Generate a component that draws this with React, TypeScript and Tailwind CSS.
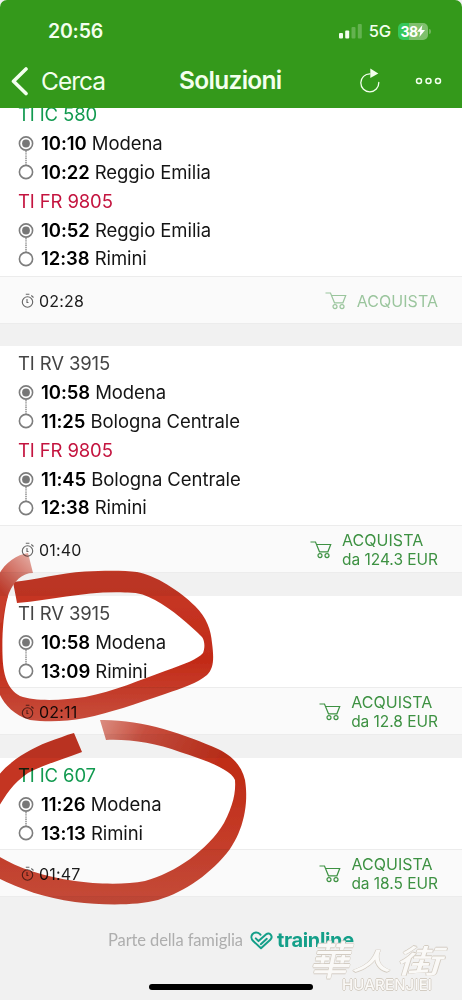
import { clsx } from 'clsx'

interface Stop {
  time: string
  station: string
}

interface Leg {
  train: string
  color: string
  from: Stop
  to: Stop
}

interface Solution {
  legs: Leg[]
  duration: string
  price?: string
}

const SOLUTIONS: Solution[] = [
  {
    legs: [
      {
        train: 'TI IC 580',
        color: 'text-[#129a50]',
        from: { time: '10:10', station: 'Modena' },
        to: { time: '10:22', station: 'Reggio Emilia' },
      },
      {
        train: 'TI FR 9805',
        color: 'text-[#c4143f]',
        from: { time: '10:52', station: 'Reggio Emilia' },
        to: { time: '12:38', station: 'Rimini' },
      },
    ],
    duration: '02:28',
  },
  {
    legs: [
      {
        train: 'TI RV 3915',
        color: 'text-[#444444]',
        from: { time: '10:58', station: 'Modena' },
        to: { time: '11:25', station: 'Bologna Centrale' },
      },
      {
        train: 'TI FR 9805',
        color: 'text-[#c4143f]',
        from: { time: '11:45', station: 'Bologna Centrale' },
        to: { time: '12:38', station: 'Rimini' },
      },
    ],
    duration: '01:40',
    price: 'da 124.3 EUR',
  },
  {
    legs: [
      {
        train: 'TI RV 3915',
        color: 'text-[#444444]',
        from: { time: '10:58', station: 'Modena' },
        to: { time: '13:09', station: 'Rimini' },
      },
    ],
    duration: '02:11',
    price: 'da 12.8 EUR',
  },
  {
    legs: [
      {
        train: 'TI IC 607',
        color: 'text-[#129a50]',
        from: { time: '11:26', station: 'Modena' },
        to: { time: '13:13', station: 'Rimini' },
      },
    ],
    duration: '01:47',
    price: 'da 18.5 EUR',
  },
]

function StatusBar() {
  return (
    <div className="flex h-[62px] items-center justify-between pl-12 pr-[31px] text-[#f3ffee]">
      <span className="pt-[2px] text-[19.5px] font-semibold tracking-[-0.2px]">20:56</span>
      <div className="flex items-center">
        <svg width="24" height="16" viewBox="0 0 24 16" fill="currentColor">
          <rect x="0" y="10" width="4" height="5.5" rx="1" />
          <rect x="6.2" y="7.5" width="4" height="8" rx="1" />
          <rect x="12.5" y="4" width="4" height="11.5" rx="1" opacity=".25" />
          <rect x="18.8" y="1" width="4" height="14.5" rx="1" opacity=".25" />
        </svg>
        <span className="ml-[6px] text-[16.5px] font-medium tracking-[-0.2px]">5G</span>
        <div className="ml-[7px] flex h-[17px] w-[30px] items-center justify-center rounded-[5px] bg-linear-to-r from-[#35c75a] from-38% to-[#7fbf6d] to-38% text-[14px] font-bold tracking-[-0.6px] text-white">
          38
          <svg width="8" height="12" viewBox="0 0 8 12" fill="currentColor">
            <path d="M5.4 0 0 6.8h3.3L2.4 12 8 5H4.6z" />
          </svg>
        </div>
        <span className="ml-px h-[5px] w-[2px] rounded-r-full bg-[#6fb55c]" />
      </div>
    </div>
  )
}

function NavBar() {
  return (
    <div className="flex h-[46px] items-center pb-[9px] text-[#f3ffee]">
      <svg className="ml-[10px]" width="20" height="30" viewBox="0 0 20 30" fill="none" stroke="currentColor" strokeWidth="3.6" strokeLinecap="round" strokeLinejoin="round">
        <path d="M16 3 3.5 15.2 16 27.5" />
      </svg>
      <span className="ml-[11px] w-[110px] pt-px text-[24.5px] tracking-[-1px]">Cerca</span>
      <h1 className="ml-[28px] w-[180px] text-[24.5px] font-semibold tracking-[-0.7px]">Soluzioni</h1>
      <svg className="ml-px" width="20" height="26" viewBox="0 0 20 26" fill="none" stroke="currentColor" strokeWidth="1.3" strokeLinecap="round">
        <path d="M10 5.8A9 9 0 1 0 18.8 14.500" />
        <path d="M10.300 .5V10l8-4.500z" fill="currentColor" stroke="none" />
      </svg>
      <svg className="ml-[35px]" width="27" height="8" viewBox="0 0 27 8" fill="none" stroke="currentColor" strokeWidth="1.5">
        <circle cx="4" cy="4" r="2.5" />
        <circle cx="13.5" cy="4" r="2.5" />
        <circle cx="23" cy="4" r="2.5" />
      </svg>
    </div>
  )
}

function Route() {
  return (
    <svg className="shrink-0" width="16" height="58" viewBox="0 0 16 58" fill="none" stroke="#7d7d7d" strokeWidth="1.6">
      <circle cx="8" cy="14.5" r="6.6" />
      <circle cx="8" cy="14.5" r="3.9" fill="#777" stroke="none" />
      <path d="M8 22V36" strokeWidth="1.3" strokeDasharray="1.4 0.8" />
      <circle cx="8" cy="43" r="6.6" />
    </svg>
  )
}

function StopRow({ stop }: { stop: Stop }) {
  return (
    <div className="h-[28.8px] whitespace-nowrap text-[18.5px] leading-[28.8px] tracking-[-0.07px] text-[#151515]">
      <b className="font-semibold text-black">{stop.time}</b> {stop.station}
    </div>
  )
}

function LegBlock({ leg }: { leg: Leg }) {
  return (
    <div>
      <div className={clsx('h-[28.8px] text-[18.5px] leading-[28.8px] tracking-[-0.12px]', leg.color)}>{leg.train}</div>
      <div className="flex gap-[7px]">
        <Route />
        <div>
          <StopRow stop={leg.from} />
          <StopRow stop={leg.to} />
        </div>
      </div>
    </div>
  )
}

function Stopwatch() {
  return (
    <svg width="14" height="16" viewBox="0 0 14 16" fill="none" stroke="#666" strokeWidth="1.1">
      <circle cx="6.5" cy="9" r="5.2" />
      <path d="M4.800 1.200h3.600M10.300 2.500l2.200 2M6 6v3.500h1.500" />
    </svg>
  )
}

function Cart() {
  return (
    <svg width="22" height="18" viewBox="0 0 22 18" fill="none" stroke="currentColor" strokeWidth="1.2">
      <path d="M.5 1h5l4 9.800h8.400L20.700 3.500H6.600" />
      <circle cx="10" cy="14.6" r="2" />
      <circle cx="17" cy="14.6" r="2" />
    </svg>
  )
}

function SolutionCard({ solution }: { solution: Solution }) {
  const { legs, duration, price } = solution
  return (
    <article className="shrink-0 first:-mb-px">
      <div className={clsx('bg-white pl-[18px] pt-[3px]', legs.length > 1 ? 'h-[179px]' : 'h-[91px]')}>
        {legs.map(leg => (
          <LegBlock key={leg.train} leg={leg} />
        ))}
      </div>
      <div className="flex h-[48px] items-center justify-between border-y border-[#ececec] bg-[#fafafa] pl-[21px] pr-[24px] pt-[2px]">
        <div className="flex items-center gap-[4px] text-[16px] tracking-[0.2px] text-[#1c1c1c]">
          <Stopwatch />
          {duration}
        </div>
        <div className={clsx('flex items-center gap-[10px] text-[#3d9142]', !price && 'opacity-50')}>
          <Cart />
          <div className="text-[16px] leading-[19px] tracking-[0.05px]">
            <div>ACQUISTA</div>
            {price && <div className="text-[15.5px] tracking-[-0.03px]">{price}</div>}
          </div>
        </div>
      </div>
    </article>
  )
}

// Hand-drawn marker circles laid over the list
function MarkerStrokes() {
  return (
    <svg className="pointer-events-none absolute inset-0 mix-blend-multiply" width="462" height="1000" viewBox="0 0 462 1000">
      <defs>
        <linearGradient id="ink1" gradientUnits="userSpaceOnUse" x1="0" y1="570" x2="0" y2="722">
          <stop offset="0" stopColor="#c73a28" />
          <stop offset=".6" stopColor="#c22b18" />
          <stop offset="1" stopColor="#cc4f3e" />
        </linearGradient>
        <linearGradient id="ink2" gradientUnits="userSpaceOnUse" x1="100" y1="722" x2="215" y2="775">
          <stop offset="0" stopColor="#e08f82" />
          <stop offset=".35" stopColor="#cb5040" />
          <stop offset="1" stopColor="#c02d18" stopOpacity="1" />
        </linearGradient>
        <linearGradient id="ink3" gradientUnits="userSpaceOnUse" x1="0" y1="780" x2="0" y2="905">
          <stop offset="0" stopColor="#c02d18" />
          <stop offset="1" stopColor="#c94c3a" />
        </linearGradient>
        <linearGradient id="tail" gradientUnits="userSpaceOnUse" x1="34" y1="560" x2="2" y2="592">
          <stop offset="0" stopColor="#e8aca3" />
          <stop offset="1" stopColor="#c83d2c" />
        </linearGradient>
        <filter id="soft">
          <feGaussianBlur stdDeviation=".6" />
        </filter>
      </defs>
      <g filter="url(#soft)">
        <path
          fill="url(#ink1)"
          d="M13 582C35 580 60 573 85 571.500C105 570.500 125 570.500 137 572C155 575 180 591 195 606C207 618 211 630 212 643C214 658 214 668 207 675C198 683 182 688 165 694C135 704 110 713 85 718C65 722 45 722 30 720C14 715 5 705 0 695L-4 690V575L8 596C3 615 2 635 2.500 655C3 674 7 689 20 696C36 702 65 700 85 697C115 691 140 680 165 671C185 664 198 659 203 653C205 648 205 641 202 637C190 625 172 609 155 600C146 595 138 592 125 592.500C85 591 55 600 17 603Z"
        />
        <path fill="url(#tail)" d="M-2 576C6 561 17 555 28 553L33 573C22 573 14 581 9 593C5 603 3 612 2 622L-3 625Z" />
        <path
          fill="url(#ink2)"
          d="M100 720C140 719 185 734 218 749C234 757 242 767 245 780L235 780C231 769 202 759 180 752C155 743 130 739 106 740Z"
        />
        <path
          fill="url(#ink3)"
          d="M235 780L245 780C249 805 243 830 230 849C212 873 185 892 158 900C135 906 100 905 75 902C45 898 20 889 -2 878V856C18 868 45 877 75 881C95 884 125 885 145 881C175 873 208 850 224 823C233 806 236 792 235 780Z"
        />
        <path fill="#c43421" d="M-2 776C8 763 27 750 48 742C57 739 66 735 74 733L82 752C62 760 42 765 28 773C13 783 5 796 -2 808Z" />
      </g>
    </svg>
  )
}

function TrainlineFooter() {
  return (
    <footer className="flex items-center pl-[108px] pt-[32px] text-[#aeaeae]">
      <span className="w-[142px] whitespace-nowrap font-['Lato',sans-serif] text-[16.5px] leading-[22px] tracking-[-0.1px]">Parte della famiglia</span>
      <svg width="23" height="19" viewBox="0 0 23 19" fill="none" stroke="#149f89" strokeWidth="2" strokeLinecap="round" strokeLinejoin="round">
        <path d="M5.800 7.400l2.700 2.700 7.700-6.800c1.600-1.300 3.500-.9 4.600.5 1.200 1.700.9 3.600-.5 4.900L11 17.200 3.200 10C1 7.900.9 5 2.600 3 4.600.9 7.700.9 9.700 2.900l.8.8" />
        <path d="M10.800 13.200l6-5.400" />
      </svg>
      <span className="ml-[4px] font-['Inter',sans-serif] text-[20px] font-bold leading-[22px] tracking-[-0.35px] text-[#149f89]">trainline</span>
    </footer>
  )
}

function Watermark() {
  return (
    <div className="absolute left-[313px] top-[936px] text-[#faf9f7] [text-shadow:0.7px_0_0_#d3ccc2,-0.7px_0_0_#d3ccc2,0_0.7px_0_#d3ccc2,0_-0.7px_0_#d3ccc2]">
      <div className="flex h-[44px] items-center whitespace-nowrap font-['Noto_Sans_CJK_TC',sans-serif] text-[40px] font-medium leading-[44px]">
        <span className="-skew-x-12">華</span>
        <span className="ml-[2px] mt-[4px] -skew-x-12 scale-y-60">人</span>
        <span className="ml-[8px] mt-[2px] -skew-x-12 scale-x-115 scale-y-80">街</span>
      </div>
      <div className="-mt-[4px] ml-[29px] text-[15px] font-medium leading-[18px] tracking-[0.15px]">HUARENJIEI</div>
    </div>
  )
}

export default function App() {
  return (
    <div className="relative flex h-[1000px] w-[462px] flex-col overflow-hidden bg-[#f1f1f1] font-['Inter','Liberation_Sans',sans-serif]">
      <header className="relative z-10 h-[108px] shrink-0 rounded-t-[7px] bg-[#34991b]">
        <StatusBar />
        <NavBar />
      </header>
      <main className="-mt-[11px] flex flex-col gap-[23px]">
        {SOLUTIONS.map(s => (
          <SolutionCard key={s.duration} solution={s} />
        ))}
      </main>
      <TrainlineFooter />
      <MarkerStrokes />
      <div className="absolute bottom-[10px] left-[149px] h-[6px] w-[164px] rounded-full bg-black" />
      <Watermark />
    </div>
  )
}
